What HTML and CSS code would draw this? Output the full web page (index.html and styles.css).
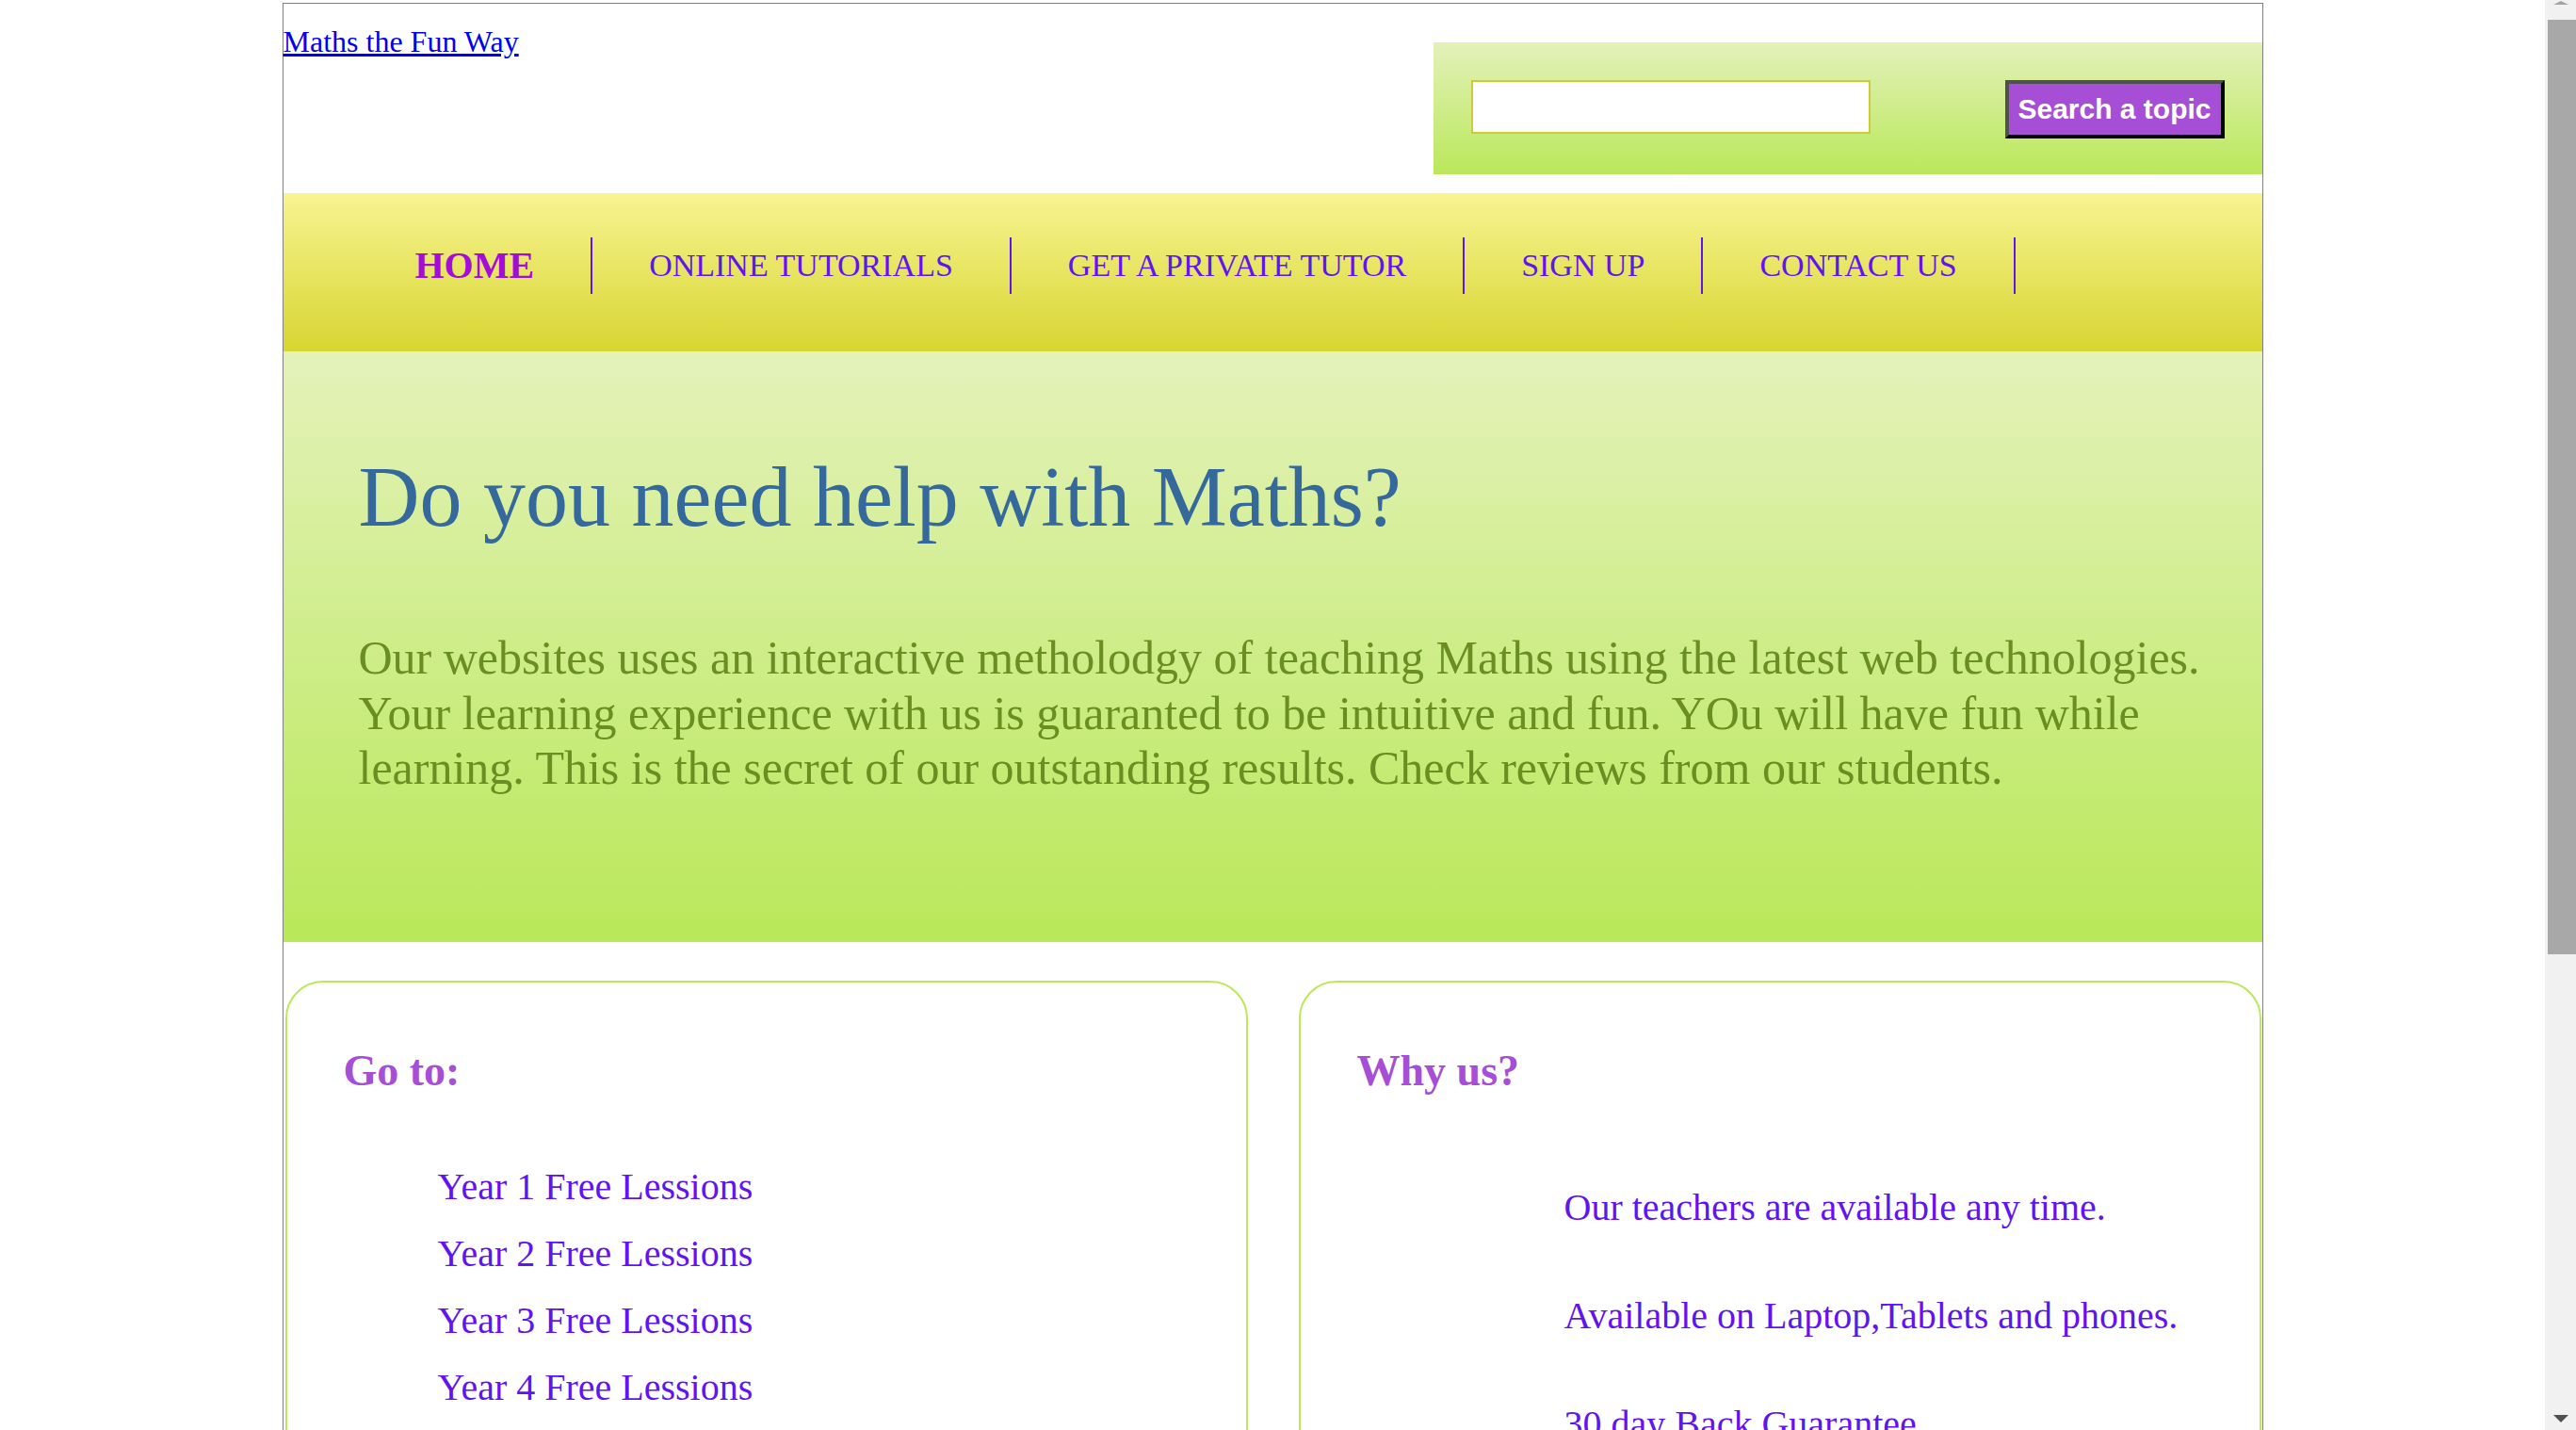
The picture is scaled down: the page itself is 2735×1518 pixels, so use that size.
FILE: index.html
```html
<!DOCTYPE html>
<html lang="en">
<head>
<meta charset="utf-8">
<title>Maths the Fun Way</title>
<link rel="stylesheet" href="styles.css">
</head>
<body>
<div class="page">
  <header class="top">
    <div class="brand"><a href="#" class="brand-link">Maths the Fun Way</a></div>
    <form class="search" onsubmit="return false;">
      <input class="search-input" type="text" aria-label="Search">
      <button class="search-btn" type="submit">Search a topic</button>
    </form>
  </header>

  <nav class="menu">
    <ul class="menu-list">
      <li class="menu-item active"><a href="#">HOME</a></li>
      <li class="menu-item"><a href="#">ONLINE TUTORIALS</a></li>
      <li class="menu-item"><a href="#">GET A PRIVATE TUTOR</a></li>
      <li class="menu-item"><a href="#">SIGN UP</a></li>
      <li class="menu-item"><a href="#">CONTACT US</a></li>
    </ul>
  </nav>

  <section class="hero">
    <h1 class="hero-title">Do you need help with Maths?</h1>
    <p class="hero-text">Our websites uses an interactive metholodgy of teaching Maths using the latest web technologies. Your learning experience with us is guaranted to be intuitive and fun. YOu will have fun while learning. This is the secret of our outstanding results. Check reviews from our students.</p>
  </section>

  <section class="cards">
    <div class="card">
      <h2 class="card-title">Go to:</h2>
      <ul class="goto-list">
        <li>Year 1 Free Lessions</li>
        <li>Year 2 Free Lessions</li>
        <li>Year 3 Free Lessions</li>
        <li>Year 4 Free Lessions</li>
      </ul>
    </div>
    <div class="card">
      <h2 class="card-title">Why us?</h2>
      <ul class="why-list">
        <li>Our teachers are available any time.</li>
        <li>Available on Laptop,Tablets and phones.</li>
        <li>30 day Back Guarantee</li>
      </ul>
    </div>
  </section>
</div>

<div class="scrollbar" aria-hidden="true">
  <span class="sb-arrow sb-up"></span>
  <span class="sb-thumb"></span>
  <span class="sb-arrow sb-down"></span>
</div>
</body>
</html>
```

FILE: styles.css
```css
html {
  background: #ffffff;
}

body {
  margin: 3px 33px 3px 0;
  font-family: "Liberation Serif", "Times New Roman", serif;
  color: #000;
}

/* ---------- window scrollbar (drawn over the right edge) ---------- */
.scrollbar {
  position: fixed;
  top: 0;
  right: 0;
  width: 33px;
  height: 100vh;
  background: #f1f1f1;
  display: flex;
  flex-direction: column;
  align-items: center;
}

.sb-arrow {
  width: 0;
  height: 0;
  border-left: 8px solid transparent;
  border-right: 8px solid transparent;
}

.sb-up {
  margin-top: 1px;
  border-bottom: 4px solid #a3a3a3;
}

.sb-thumb {
  margin: 16px 0 0 3px;
  width: 30px;
  height: 992px;
  background: #a8a8a8;
}

.sb-down {
  margin-top: auto;
  margin-bottom: 8px;
  border-top: 8px solid #505050;
}

.page {
  width: 2101px;
  margin: 0 auto;
  border: 1px solid #808080;
}

/* ---------- header ---------- */
.top {
  display: flex;
  justify-content: space-between;
  align-items: flex-start;
}

.brand {
  padding-top: 22px;
  font-size: 32px;
}

.brand-link {
  color: #0000ee;
  text-decoration: underline;
}

.search {
  width: 880px;
  height: 140px;
  box-sizing: border-box;
  margin: 41px 0 20px 0;
  padding: 40px;
  display: flex;
  justify-content: space-between;
  align-items: flex-start;
  background: linear-gradient(to bottom, #e3f1b9, #bae85b);
}

.search-input {
  width: 424px;
  height: 57px;
  box-sizing: border-box;
  border: 2px solid #cdcb3a;
  background: #ffffff;
  margin: 0;
  padding: 0 6px;
  font-size: 28px;
  font-family: "Liberation Sans", Arial, sans-serif;
}

.search-btn {
  width: 233px;
  height: 62px;
  box-sizing: border-box;
  margin: 0;
  padding: 0;
  border-style: solid;
  border-width: 4px;
  border-color: #505050 #000000 #000000 #505050;
  background: #a64fd6;
  color: #ffffff;
  font-family: "Liberation Sans", Arial, sans-serif;
  font-weight: bold;
  font-size: 30px;
}

/* ---------- nav ---------- */
.menu {
  background: linear-gradient(to bottom, #f8f492, #d7d531);
}

.menu-list {
  display: flex;
  list-style: none;
  margin: 0;
  padding: 47px 0 61px 80px;
}

.menu-item {
  padding: 0 60px;
  border-right: 2px solid #5f14f0;
  line-height: 60px;
  font-size: 34px;
}

.menu-item a {
  color: #5f14f0;
  text-decoration: none;
}

.menu-item.active {
  font-size: 40px;
  font-weight: bold;
}

.menu-item.active a {
  color: #a40cd8;
}

/* ---------- hero ---------- */
.hero {
  padding: 103px 40px 155px 80px;
  background: linear-gradient(to bottom, #e4f2ba, #b9e859);
}

.hero-title {
  margin: 0;
  font-size: 90px;
  font-weight: normal;
  line-height: normal;
  color: #35699b;
}

.hero-text {
  margin: 90px 0 0 0;
  font-size: 50px;
  line-height: 58.5px;
  color: #6b8e23;
}

/* ---------- cards ---------- */
.cards {
  display: flex;
  gap: 54px;
  margin-top: 41px;
  padding: 0 1px 44px 2px;
}

.card {
  flex: 1;
  min-height: 1175px;
  border: 2px solid #bbe95b;
  border-radius: 40px;
}

.card-title {
  margin: 67px 0 0 60px;
  font-size: 46px;
  font-weight: bold;
  line-height: normal;
  color: #a64fd6;
}

.goto-list,
.why-list {
  list-style: none;
  margin: 61px 0 0 0;
  font-size: 40px;
  color: #5f14f0;
}

.goto-list {
  padding-left: 160px;
  line-height: 71px;
}

.why-list {
  padding-left: 280px;
  line-height: 115px;
}
```
